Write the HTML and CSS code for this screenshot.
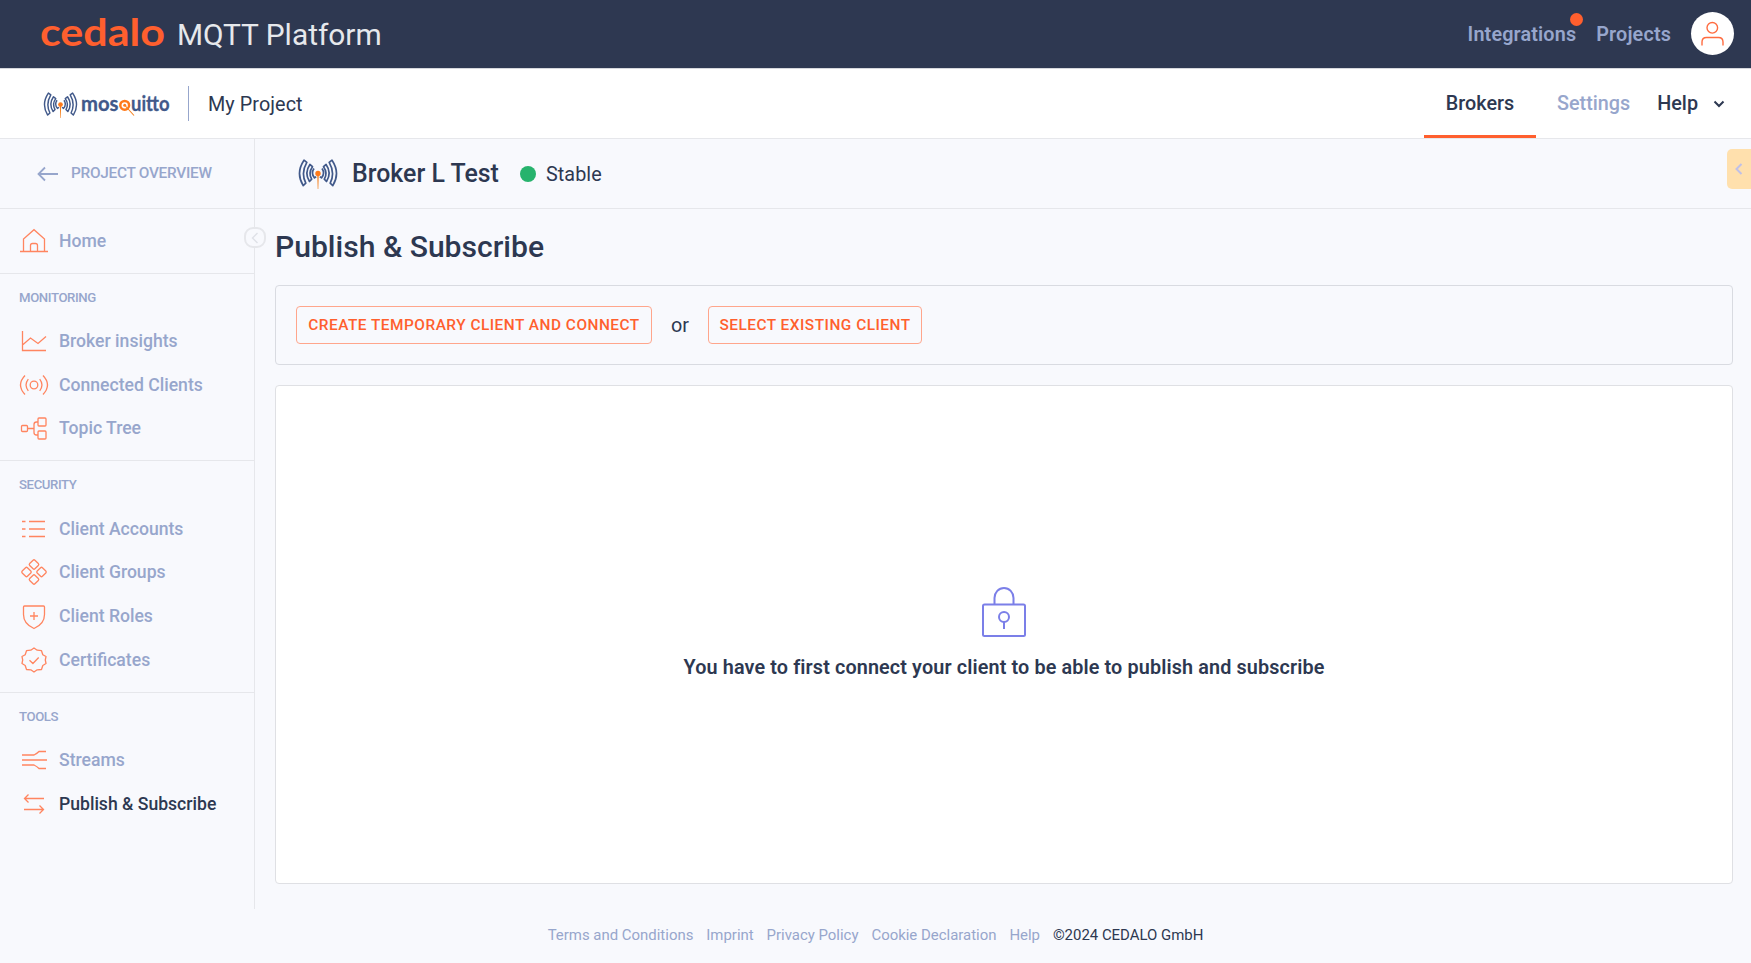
FILE: index.html
```html
<!DOCTYPE html>
<html lang="en">
<head>
<meta charset="utf-8">
<title>Cedalo MQTT Platform</title>
<link rel="stylesheet" href="styles.css">
</head>
<body>
<svg class="defs" aria-hidden="true">
  <symbol id="waves" viewBox="0 0 40 30">
    <g fill="none" stroke="#41598a" stroke-width="1.7" stroke-linejoin="round">
      <path d="M6 1.2 L8.800 3.400 Q2.600 14 7.800 24.200 L5.200 26.600 Q-2.600 14 6 1.200Z"/>
      <path d="M34 1.2 L31.200 3.400 Q37.400 14 32.200 24.200 L34.800 26.600 Q42.600 14 34 1.200Z"/>
      <path d="M11.900 5.500 L14.500 7.700 Q10 14 13.700 20.200 L11.500 22.500 Q6 14 11.900 5.500Z"/>
      <path d="M28.100 5.500 L25.500 7.700 Q30 14 26.300 20.200 L28.500 22.500 Q34 14 28.100 5.500Z"/>
      <path d="M16 9.500 Q12.600 14.200 16.500 18.900 L18.200 17.600"/>
      <path d="M24 9.500 Q27.400 14.200 23.500 18.900 L21.800 17.600"/>
    </g>
    <path d="M19.200 14h1.600l-.5 16h-.6z" fill="#f58220"/>
    <circle cx="20" cy="14.500" r="2.700" fill="#ff7a1a"/>
  </symbol>
</svg>

<header class="topbar">
  <svg class="cedalo" viewBox="0 0 126 46"><text x="0" y="37" textLength="125" lengthAdjust="spacingAndGlyphs">cedalo</text></svg>
  <span class="product">MQTT Platform</span>
  <nav class="topnav">
    <a class="integrations">Integrations<i class="dot"></i></a>
    <a class="projects">Projects</a>
    <span class="avatar"><svg viewBox="0 0 43 43"><circle cx="21.300" cy="15.800" r="5.300"/><path d="M11 33.500v-3.500q0-4.500 4.500-4.500h12q4.500 0 4.500 4.500v3.500"/></svg></span>
  </nav>
</header>

<div class="projectbar">
  <svg class="mark" viewBox="0 0 40 30"><use href="#waves"/></svg>
  <svg class="mosquitto" viewBox="0 0 90 32">
    <text x="0" y="22.500" textLength="37.500" lengthAdjust="spacingAndGlyphs">mos</text>
    <text x="50" y="22.500" textLength="38.500" lengthAdjust="spacingAndGlyphs">uitto</text>
    <circle cx="43.700" cy="17.300" r="4.400" stroke="#ff7a1a" stroke-width="2.500"/>
    <circle cx="43.700" cy="17.300" r="1.500" fill="#ff7a1a"/>
    <path d="M44 17.500l9 10" stroke="#f58220" stroke-width="1.100"/>
  </svg>
  <span class="project">My Project</span>
  <nav class="tabs">
    <a class="tab active">Brokers</a>
    <a class="tab settings">Settings</a>
    <a class="tab help">Help</a>
    <svg class="chev" viewBox="0 0 12 8"><path d="M1.500 1.500L6 6l4.500-4.500"/></svg>
  </nav>
</div>

<div class="main">
  <aside class="sidebar">
    <a class="overview"><svg class="back" viewBox="0 0 22 16"><path d="M21 8H1.500M8 1.500L1.500 8l6.500 6.500"/></svg><span>PROJECT OVERVIEW</span></a>
    <section class="home">
      <a class="item"><svg viewBox="0 0 30 30"><path d="M1 25.500h28M4.500 25.500V13L15 3.700 25.500 13v12.500M11.500 25.500v-6q0-2 2-2h3q2 0 2 2v6"/></svg>Home</a>
    </section>
    <section class="group monitoring">
      <h2>MONITORING</h2>
      <a class="item"><svg viewBox="0 0 30 30"><path d="M3.500 5v19.500H27M3.500 19l8-7 7.500 5.500 8-7"/></svg>Broker insights</a>
      <a class="item"><svg viewBox="0 0 30 30"><circle cx="15" cy="15" r="3.800"/><path d="M9.300 9.200q-4.500 5.800 0 11.600M20.700 9.200q4.500 5.800 0 11.600M6 5.500q-9 9.500 0 19M24 5.500q9 9.500 0 19"/></svg>Connected Clients</a>
      <a class="item"><svg viewBox="0 0 30 30"><rect x="2.500" y="12.500" width="6" height="6" rx="1"/><rect x="19" y="5" width="8" height="8" rx="1"/><rect x="19" y="18" width="8" height="8" rx="1"/><path d="M8.500 15.500H15M19 9h-1.500q-2.500 0-2.500 2.500v8q0 2.500 2.500 2.500H19"/></svg>Topic Tree</a>
    </section>
    <section class="group security">
      <h2>SECURITY</h2>
      <a class="item"><svg viewBox="0 0 30 30"><path d="M3 7.500h3.500M10 7.500h16M3 15h3.500M10 15h16M3 22.500h3.500M10 22.500h16"/></svg>Client Accounts</a>
      <a class="item"><svg viewBox="0 0 30 30"><rect x="-3.700" y="-3.700" width="7.400" height="7.400" rx="1.300" transform="translate(15 7.500)rotate(45)"/><rect x="-3.700" y="-3.700" width="7.400" height="7.400" rx="1.300" transform="translate(15 22.500)rotate(45)"/><rect x="-3.700" y="-3.700" width="7.400" height="7.400" rx="1.300" transform="translate(7.500 15)rotate(45)"/><rect x="-3.700" y="-3.700" width="7.400" height="7.400" rx="1.300" transform="translate(22.500 15)rotate(45)"/></svg>Client Groups</a>
      <a class="item"><svg viewBox="0 0 30 30"><path d="M5.500 5h19q1 0 1 1v7.500q0 9.500-10.500 14Q4.500 23 4.500 13.500V6q0-1 1-1zM11 15h8M15 11v8"/></svg>Client Roles</a>
      <a class="item"><svg viewBox="0 0 30 30"><path d="M15 3l3.200 2.200 4.300.5 1.300 4L27 11.500l-.7 3.500.7 3.500-3.200 2-1.300 4-4.300.300L15 27l-3.200-2.200-4.300-.3-1.300-4L3 18.500 3.700 15 3 11.500l3.200-1.800 1.300-4 4.300-.5zM10.500 15.200l3.400 3.300 5.800-6" stroke-linejoin="round"/></svg>Certificates</a>
    </section>
    <section class="group tools">
      <h2>TOOLS</h2>
      <a class="item"><svg viewBox="0 0 30 30"><path d="M3 10h12q3-1.500 5-3.500h7M3 15h25M3 20h12q3 1.500 5 3.500h7"/></svg>Streams</a>
      <a class="item current"><svg viewBox="0 0 30 30"><path d="M25 9.500H5.500M9.500 5.500l-4 4 4 4M5 20.500h19.500M20.500 16.500l4 4-4 4"/></svg>Publish &amp; Subscribe</a>
    </section>
    <button class="collapse"><svg viewBox="0 0 8 12"><path d="M6.500 1L1.500 6l5 5"/></svg></button>
  </aside>

  <main class="content">
    <div class="broker">
      <svg class="brokermark" viewBox="0 0 40 30"><use href="#waves"/></svg>
      <h1>Broker L Test</h1>
      <i class="status"></i><span class="stable">Stable</span>
    </div>
    <div class="page">
      <h2 class="title">Publish &amp; Subscribe</h2>
      <div class="connect">
        <button class="btn create">CREATE TEMPORARY CLIENT AND CONNECT</button>
        <span class="or">or</span>
        <button class="btn select">SELECT EXISTING CLIENT</button>
      </div>
      <div class="locked">
        <svg class="lock" viewBox="0 0 46 52"><rect x="2" y="18.500" width="42" height="31.500" rx="1.500"/><path d="M13.500 18.500V12a9.500 10 0 0 1 19 0v6.500M23 36v7"/><ellipse cx="23" cy="31" rx="5" ry="5"/></svg>
        <p>You have to first connect your client to be able to publish and subscribe</p>
      </div>
    </div>
    <div class="drawer"><svg viewBox="0 0 8 12"><path d="M6.500 1L1.500 6l5 5"/></svg></div>
  </main>
</div>

<footer class="footer">
  <a>Terms and Conditions</a><a>Imprint</a><a>Privacy Policy</a><a>Cookie Declaration</a><a>Help</a><span>©2024 CEDALO GmbH</span>
</footer>
</body>
</html>
```
FILE: styles.css
```css
* { box-sizing: border-box; }
body {
  margin: 0;
  height: 963px;
  overflow: hidden;
  display: flex;
  flex-direction: column;
  background: #f8f9fd;
  color: #2d3851;
  font-family: Roboto, sans-serif;
  font-size: 17.6px;
}
h1, h2, p { margin: 0; font-weight: 500; }
svg { display: block; flex: none; fill: none; overflow: visible; }
.defs { position: absolute; width: 0; height: 0; }

.topbar {
  height: 69px;
  flex: none;
  display: flex;
  align-items: center;
  padding: 0 17px 1px 40px;
  background: #2e3851;
  border-bottom: 1px solid #d5d7dc;
}
.cedalo { width: 126px; height: 46px; margin-top: -4px; }
.cedalo text { font: 700 38px Lato, sans-serif; fill: #ff5f2e; }
.product { margin: 2px 0 0 11px; font-size: 29.9px; font-weight: 400; color: #e6e8ec; }
.topnav { margin-left: auto; display: flex; align-items: center; font-size: 19.8px; font-weight: 600; letter-spacing: .15px; color: #97a6cc; }
.integrations { position: relative; padding-top: 2px; }
.dot { position: absolute; right: -7px; top: -8px; width: 13px; height: 13px; border-radius: 50%; background: #ff5f2e; }
.projects { margin-left: 20px; padding-top: 2px; }
.avatar { margin-left: 20px; width: 43px; height: 43px; border-radius: 50%; background: #fff; }
.avatar svg { width: 43px; height: 43px; stroke: #ff6c40; stroke-width: 1.4; }

.projectbar {
  height: 70px;
  flex: none;
  display: flex;
  align-items: center;
  padding-left: 43px;
  background: #fff;
  border-bottom: 1px solid #e6e7eb;
}
.mark { width: 35px; height: 26px; margin-top: 2px; }
.mosquitto { width: 90px; height: 32px; margin-left: 3px; }
.mosquitto text { font: 700 21px Lato, sans-serif; fill: #41598a; stroke: #41598a; stroke-width: .3; }
.project { height: 35px; margin-left: 17px; padding-left: 19px; border-left: 1px solid #97a6cc; font-size: 19.8px; line-height: 37px; letter-spacing: .08px; }
.tabs { margin-left: auto; align-self: stretch; display: flex; align-items: center; padding-right: 26px; font-size: 19.8px; font-weight: 500; }
.tab { height: 69px; line-height: 70px; }
.tab.active { width: 112px; text-align: center; border-bottom: 3px solid #ff5f2e; }
.settings { margin-left: 21px; color: #97a6cc; }
.help { margin-left: 27px; }
.chev { width: 12px; height: 8px; margin-left: 15px; stroke: #2d3851; stroke-width: 2; }

.main { height: 770px; flex: none; display: flex; }
.sidebar { position: relative; width: 255px; flex: none; border-right: 1px solid #e6e7eb; }
.overview { height: 70px; display: flex; align-items: center; padding: 0 0 2px 37px; border-bottom: 1px solid #e6e7eb; font-size: 15.4px; font-weight: 500; letter-spacing: -.28px; color: #97a6cc; }
.back { width: 22px; height: 16px; margin: 2px 12px 0 0; stroke: #97a6cc; stroke-width: 1.8; }
.home { height: 65px; padding-top: 10px; border-bottom: 1px solid #e6e7eb; }
.group { border-bottom: 1px solid #e6e7eb; }
.group h2 { height: 45px; padding: 16px 0 0 19px; font-size: 13.2px; line-height: 15px; color: #97a6cc; letter-spacing: -.4px; }
.monitoring { height: 187px; }
.security { height: 232px; }
.security h2 { height: 45.8px; }
.tools { border: 0; }
.item { height: 43.700px; display: flex; align-items: center; padding-left: 19px; color: #97a6cc; font-weight: 500; }
.item svg { width: 30px; height: 30px; margin-right: 10px; stroke: #ff8560; stroke-width: 1.3; }
.item.current { color: #2d3851; }
.collapse { position: absolute; left: 244px; top: 88px; width: 22px; height: 21px; padding: 0; display: grid; place-items: center; border: 2px solid #e6e7eb; border-radius: 9px; background: #f8f9fd; }
.collapse svg { width: 8px; height: 12px; stroke: #dfe1e7; stroke-width: 1.400; }

.content { position: relative; flex: 1; }
.broker { height: 70px; display: flex; align-items: center; padding-left: 42.5px; border-bottom: 1px solid #e6e7eb; }
.brokermark { width: 40px; height: 30px; }
.broker h1 { margin-left: 14.5px; font-size: 24.9px; }
.status { width: 16px; height: 16px; margin-left: 21px; border-radius: 50%; background: #27b36d; }
.stable { margin: 2px 0 0 10px; font-size: 19.8px; letter-spacing: .1px; }
.page { padding: 0 18px 0 20px; }
.title { height: 76px; line-height: 76px; font-size: 30.1px; }
.connect { height: 80px; display: flex; align-items: center; padding-left: 20px; border: 1px solid #d9dbe1; border-radius: 4px; }
.btn { height: 38px; padding: 0 0 1px; border: 1px solid #ffa68c; border-radius: 4px; background: none; color: #ff5f2e; font: 500 15.4px Roboto, sans-serif; letter-spacing: .5px; white-space: nowrap; }
.create { width: 356px; }
.select { width: 214px; }
.or { width: 56px; text-align: center; font-size: 19.8px; }
.locked { height: 499px; margin-top: 20px; display: flex; flex-direction: column; align-items: center; padding-top: 200px; background: #fff; border: 1px solid #dfe0e4; border-radius: 4px; }
.lock { width: 46px; height: 52px; stroke: #7b7fe8; stroke-width: 2; }
.locked p { margin-top: 18px; font-size: 19.8px; line-height: 24px; font-weight: 600; letter-spacing: .13px; }
.drawer { position: absolute; right: 0; top: 10px; width: 24px; height: 40px; display: grid; place-items: center; background: #ffe0ad; border-radius: 5px 0 0 5px; }
.drawer svg { width: 8px; height: 12px; stroke: #bfc0e8; stroke-width: 2; }

.footer { display: flex; justify-content: center; gap: 12.9px; padding-top: 18px; font-size: 14.950px; line-height: 17px; color: #97a6cc; }
.footer span { color: #2d3851; }
```
